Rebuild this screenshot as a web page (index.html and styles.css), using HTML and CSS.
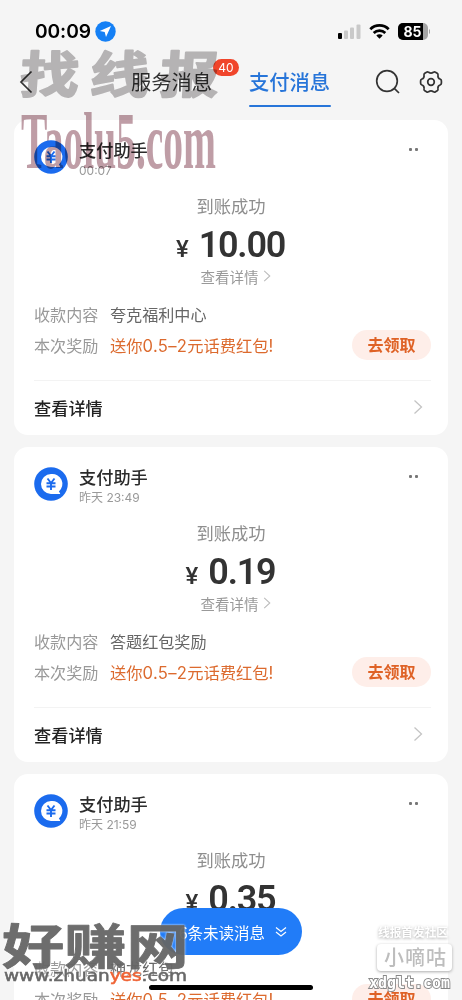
FILE: index.html
```html
<!DOCTYPE html>
<html lang="zh-CN">
<head>
<meta charset="utf-8">
<title>支付消息</title>
<link rel="stylesheet" href="styles.css">
</head>
<body>
<svg class="defs" width="0" height="0">
  <symbol id="avatar" viewBox="0 0 34 34">
    <circle cx="17" cy="17" r="16.800" fill="#1b6bee"/>
    <path d="M17 7a10 10 0 1 0 0 20h8.500c.8 0 .9-.6.4-1.100l-1-1.400A10 10 0 0 0 17 7z" fill="#fff"/>
    <path d="M13.500 11.500l3.500 4.500 3.500-4.500M12.500 16.200h9M12.500 19.500h9M17 16v7" fill="none" stroke="#1b6bee" stroke-width="1.900"/>
  </symbol>
  <symbol id="chev" viewBox="0 0 10 16"><path d="M1.500 1.500L8.500 8l-7 6.500" fill="none" stroke="currentColor" stroke-width="1.300"/></symbol>
</svg>
<div class="phone">
  <header class="status">
    <span class="clock">00:09</span>
    <svg class="loc" width="21" height="21" viewBox="0 0 21 21"><circle cx="10.500" cy="10.500" r="10.200" fill="#1580f5"/><path d="M16 5L4.800 10l4.900 1.100L11 16z" fill="#fff"/></svg>
    <svg class="sys" width="93" height="20" viewBox="0 0 93 20">
      <rect x="1" y="12" width="4" height="6" rx="1" fill="#000"/>
      <g fill="#c9c9c9"><rect x="7" y="9.500" width="4" height="8.500" rx="1"/><rect x="13" y="6.500" width="4" height="11.500" rx="1"/><rect x="19.500" y="3.500" width="4" height="14.500" rx="1"/></g>
      <g fill="none" stroke="#000" stroke-width="2.700"><path d="M33.300 8.200a13 13 0 0 1 18.400 0"/><path d="M36.700 12a8.300 8.300 0 0 1 11.600 0"/></g>
      <path d="M42.500 17.800l-3.200-3.300a4.600 4.600 0 0 1 6.400 0z" fill="#000"/>
      <rect x="61" y="2" width="30" height="17" rx="5" fill="#a5a5a5"/>
      <path d="M66 2h20v17H66a5 5 0 0 1-5-5V7a5 5 0 0 1 5-5z" fill="#000"/>
      <path d="M92 8a3 3 0 0 1 0 5z" fill="#a5a5a5"/>
      <text class="batt" x="75.500" y="15.500" text-anchor="middle">85</text>
    </svg>
  </header>
  <nav class="nav">
    <svg class="back" width="14" height="24" viewBox="0 0 14 24"><path d="M12.500 1.500L2 12l10.500 10.500" fill="none" stroke="#333" stroke-width="1.700"/></svg>
    <div class="tab">服务消息<span class="badge">40</span></div>
    <div class="tab on">支付消息</div>
    <svg class="search" width="26" height="26" viewBox="0 0 26 26" fill="none" stroke="#333" stroke-width="1.700"><circle cx="12" cy="12" r="10.300"/><path d="M19.300 19.300l4.700 4.700"/></svg>
    <svg class="gear" width="24" height="24" viewBox="0 0 24 24" fill="none" stroke="#333" stroke-width="1.700" stroke-linejoin="round"><path d="M7.500 2.200Q8.600 1.400 9.600 2.300Q12 4.100 14.400 2.300Q15.400 1.400 16.500 2.200L18.200 3.300Q19.300 4 19 5.300Q18.500 8 21 9Q22.400 9.600 22.400 10.800V13.200Q22.400 14.400 21 15Q18.500 16 19 18.700Q19.300 20 18.200 20.700L16.500 21.800Q15.400 22.600 14.400 21.700Q12 19.900 9.600 21.700Q8.600 22.600 7.500 21.800L5.800 20.700Q4.700 20 5 18.700Q5.500 16 3 15Q1.600 14.400 1.600 13.200V10.800Q1.600 9.600 3 9Q5.500 8 5 5.300Q4.700 4 5.800 3.300Z"/><circle cx="12" cy="12" r="3.300"/></svg>
  </nav>
  <main class="list">
    <section class="card">
      <div class="head"><svg class="avatar"><use href="#avatar"/></svg><div class="who"><div class="name">支付助手</div><div class="time">00:07</div></div><div class="dots"><i></i><i></i></div></div>
      <div class="state">到账成功</div>
      <div class="amount"><span class="yen">¥</span><span class="num">10.00</span></div>
      <div class="more">查看详情<svg width="8" height="14"><use href="#chev"/></svg></div>
      <div class="row first"><span class="key">收款内容</span><span class="val">夸克福利中心</span></div>
      <div class="row"><span class="key">本次奖励</span><span class="val promo">送你<b>0.5–2</b>元话费红包<b>!</b></span><span class="btn">去领取</span></div>
      <div class="foot">查看详情<svg width="10" height="16"><use href="#chev"/></svg></div>
    </section>
    <section class="card">
      <div class="head"><svg class="avatar"><use href="#avatar"/></svg><div class="who"><div class="name">支付助手</div><div class="time">昨天 23:49</div></div><div class="dots"><i></i><i></i></div></div>
      <div class="state">到账成功</div>
      <div class="amount"><span class="yen">¥</span><span class="num">0.19</span></div>
      <div class="more">查看详情<svg width="8" height="14"><use href="#chev"/></svg></div>
      <div class="row first"><span class="key">收款内容</span><span class="val">答题红包奖励</span></div>
      <div class="row"><span class="key">本次奖励</span><span class="val promo">送你<b>0.5–2</b>元话费红包<b>!</b></span><span class="btn">去领取</span></div>
      <div class="foot">查看详情<svg width="10" height="16"><use href="#chev"/></svg></div>
    </section>
    <section class="card">
      <div class="head"><svg class="avatar"><use href="#avatar"/></svg><div class="who"><div class="name">支付助手</div><div class="time">昨天 21:59</div></div><div class="dots"><i></i><i></i></div></div>
      <div class="state">到账成功</div>
      <div class="amount"><span class="yen">¥</span><span class="num">0.35</span></div>
      <div class="more">查看详情<svg width="8" height="14"><use href="#chev"/></svg></div>
      <div class="row first"><span class="key">收款内容</span><span class="val">神龙红包</span></div>
      <div class="row"><span class="key">本次奖励</span><span class="val promo">送你<b>0.5–2</b>元话费红包<b>!</b></span><span class="btn">去领取</span></div>
      <div class="foot">查看详情<svg width="10" height="16"><use href="#chev"/></svg></div>
    </section>
  </main>
  <div class="unread">6条未读消息<svg width="12" height="12" viewBox="0 0 12 12" fill="none" stroke="#fff" stroke-width="1.200"><path d="M1 1.500l5 4 5-4M1 6l5 4 5-4"/></svg></div>
  <div class="home"></div>
  <svg class="marks under" width="462" height="1000" viewBox="0 0 462 1000">
    <g class="brush">
      <text transform="translate(19 92.500) skewX(-4) scale(1.180 1)">找</text>
      <text transform="translate(89 92.500) skewX(-4) scale(1.180 1)">线</text>
      <text transform="translate(159 92.500) skewX(-4) scale(1.180 1)">报</text>
    </g>
    <text class="taolu" x="21" y="168" textLength="195" lengthAdjust="spacingAndGlyphs">Taolu5.com</text>
  </svg>
  <svg class="marks" width="462" height="1000" viewBox="0 0 462 1000">
    <text class="zhuan" transform="translate(2 963.500) scale(1.270 1)" textLength="147" lengthAdjust="spacingAndGlyphs">好赚网</text>
    <text class="url" x="4" y="980.500" textLength="183" lengthAdjust="spacingAndGlyphs">www.zhuan<tspan class="yes">yes</tspan>.com</text>
    <g class="soft">
      <text class="club" x="378" y="936.500" textLength="70" lengthAdjust="spacingAndGlyphs">线报首发社区</text>
      <rect x="377" y="944" width="75" height="27" rx="4" fill="#fff"/>
    </g>
    <text class="digu" x="384" y="965" textLength="62">小嘀咕</text>
    <text class="xd" x="369" y="988" textLength="81" lengthAdjust="spacingAndGlyphs">xdglt.com</text>
  </svg>
</div>
</body>
</html>
```

FILE: styles.css
```css
* { box-sizing: border-box; }
body { margin: 0; background: #f5f5f5; font-family: "Noto Sans CJK SC", sans-serif; }
.defs { position: absolute; }
.phone { position: relative; width: 462px; height: 1000px; overflow: hidden; background: #f5f5f5; color: #333; }
.status { display: flex; align-items: center; height: 44px; padding: 18px 32px 0 35px; }
.clock { width: 60px; font: 600 19.200px/24px Inter, sans-serif; color: #000; letter-spacing: -.1px; }
.loc { flex: none; }
.sys { margin-left: auto; }
.batt { font: 700 14px Inter, sans-serif; fill: #fff; }
.nav { display: flex; align-items: center; height: 76px; padding: 0 19px; }
.nav .back { margin-right: 98px; }
.tab { position: relative; width: 81px; height: 50px; margin-right: 37px; font-size: 20.300px; line-height: 49px; white-space: nowrap; }
.tab.on { color: #2775d9; font-weight: 500; margin-right: 45px; }
.tab.on::after { content: ""; position: absolute; left: 0; right: -1px; bottom: 0; height: 2.500px; border-radius: 2px; background: #2775d9; }
.badge { position: absolute; left: 82px; top: 2px; width: 26px; height: 17px; border-radius: 9px; background: #f0452b; color: #fff; font: 12px/17px Inter, sans-serif; text-align: center; }
.search { margin-right: 18px; }
.search, .gear, .back { flex: none; }
.list { display: grid; gap: 12px; padding: 0 14px; }
.card { height: 315px; padding: 20px 17px 0 20px; border-radius: 14px; background: #fff; }
.head { display: flex; height: 40px; }
.avatar { width: 34px; height: 34px; margin-right: 11px; }
.name { font-size: 17.200px; line-height: 19px; color: #2b2b2b; font-weight: 500; }
.time { margin-top: 3px; font: 12px/18px Inter, "Noto Sans CJK SC", sans-serif; color: #999; }
.dots { display: flex; gap: 2.500px; margin: 7.500px 13px 0 auto; }
.dots i { width: 3.500px; height: 3.500px; border-radius: 1px; background: #777; }
.state { margin: 14px 0 0 -3px; height: 24px; text-align: center; font-size: 17.300px; line-height: 24px; color: #8e8e8e; }
.amount { display: flex; justify-content: center; align-items: baseline; gap: 10px; height: 48px; margin-left: -4px; font-family: Roboto, sans-serif; color: #333; line-height: 54px; }
.yen { font-size: 24px; font-weight: 500; }
.num { font-size: 36px; font-weight: 600; letter-spacing: -1.200px; }
.more { display: flex; justify-content: center; align-items: center; gap: 4px; height: 20px; margin-left: 6px; font-size: 14.500px; color: #999; }
.more svg { color: #bbb; }
.row { display: flex; align-items: center; height: 31px; font-size: 16.100px; color: #666; }
.row.first { margin-top: 12px; }
.key { width: 76px; color: #999; }
.promo { color: #dc6a2e; font-size: 16.300px; }
.promo b { font: 16.600px Inter, sans-serif; letter-spacing: .3px; }
.btn { width: 79px; height: 30px; margin-left: auto; border-radius: 15px; background: #feeee9; color: #df6226; font-size: 16px; line-height: 29px; font-weight: 700; text-align: center; }
.foot { display: flex; justify-content: space-between; align-items: center; height: 54px; margin-top: 20px; padding: 0 8px 1px 0; border-top: 1px solid #f3f3f3; font-size: 17.200px; font-weight: 500; color: #222; }
.foot svg { color: #c4c4c4; }
.unread { position: absolute; left: 160px; top: 908px; width: 142px; height: 47px; display: flex; align-items: center; justify-content: center; gap: 10px; border-radius: 24px; background: #217cf8; color: #fff; font-size: 15.500px; white-space: nowrap; padding-left: 4px; }
.home { position: absolute; left: 149px; top: 985px; width: 164px; height: 5px; border-radius: 3px; background: #000; }
.marks { position: absolute; left: 0; top: 0; pointer-events: none; }
.under { mix-blend-mode: multiply; }
.brush { font: 700 50px "Noto Sans CJK SC", sans-serif; fill: #bdbbbc; stroke: #bdbbbc; stroke-width: 1.800px; stroke-linejoin: round; }
.taolu { font: 700 80px "Liberation Serif", serif; fill: #b8939d; opacity: .9; }
.zhuan { font: 700 48px "Noto Sans CJK SC", sans-serif; fill: #666; stroke: #666; stroke-width: .8px; stroke-linejoin: round; opacity: .95; filter: drop-shadow(0 0 1px #fff); }
.url { font: 400 15px "DejaVu Sans", sans-serif; fill: #686868; stroke: #686868; stroke-width: .5px; filter: drop-shadow(0 0 1px #fff); }
.yes { fill: #ef6233; stroke: #ef6233; }
.soft { filter: drop-shadow(0 1px 1.500px #aaa); }
.club { font: 700 12px "Noto Sans CJK SC", sans-serif; fill: #fff; }
.digu { font: 500 20px "Noto Sans CJK SC", sans-serif; fill: #bdbdbd; }
.xd { font: 700 15px "DejaVu Sans Mono", monospace; fill: #fff; stroke: #888; stroke-width: 1.800px; paint-order: stroke; }
```
